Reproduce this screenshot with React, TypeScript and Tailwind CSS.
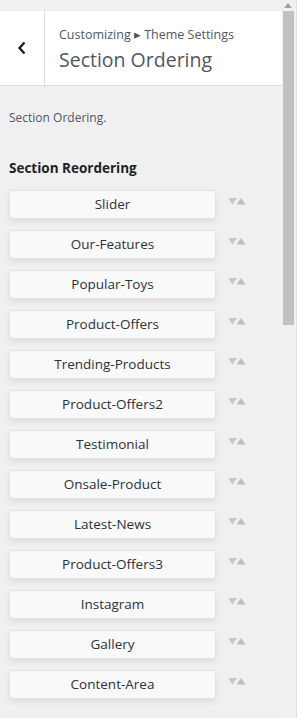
import React from "react";

const items = [
  "Slider",
  "Our-Features",
  "Popular-Toys",
  "Product-Offers",
  "Trending-Products",
  "Product-Offers2",
  "Testimonial",
  "Onsale-Product",
  "Latest-News",
  "Product-Offers3",
  "Instagram",
  "Gallery",
  "Content-Area",
];

function Arrows() {
  return (
    <svg width="18" height="7" viewBox="0 0 18 7" className="block">
      <polygon points="0,0 9,0 4.5,6.5" fill="#c8c8c8" />
      <polygon points="8.5,6.5 17.5,6.5 13,0" fill="#bdbdbd" />
    </svg>
  );
}

export default function App() {
  return (
    <div
      className="flex h-[718px] w-[297px] overflow-hidden bg-[#f0f0f1]"
      style={{ fontFamily: '"Open Sans", "Noto Sans", sans-serif' }}
    >
      <div className="flex w-[282px] flex-col pt-[11px]">
        <div className="flex h-[75px] border-b border-[#dcdcde] bg-white">
          <div className="flex w-[45px] items-center justify-center border-r border-[#dcdcde]">
            <svg width="10" height="14" viewBox="0 0 10 14">
              <path d="M7.5 1.5 L2.5 7 L7.5 12.5" fill="none" stroke="#1d2327" strokeWidth="2.4" />
            </svg>
          </div>
          <div className="flex flex-col pl-[14px] pt-[15px]">
            <div className="text-[12.5px] leading-[18px] text-[#50575e]">Customizing ▸ Theme Settings</div>
            <div className="mt-[3px] text-[19.5px] leading-[26px] text-[#50575e]">Section Ordering</div>
          </div>
        </div>
        <div className="pl-[9px] pt-[23px] text-[12px] leading-[18px] text-[#50575e]">Section Ordering.</div>
        <div className="pl-[9px] pt-[31px] text-[13.5px] font-bold leading-[20px] text-[#1d2327]">
          Section Reordering
        </div>
        <div className="flex flex-col gap-[11px] pl-[9px] pt-[12px]">
          {items.map((it) => (
            <div key={it} className="flex items-center">
              <div className="flex h-[29px] w-[207px] items-center justify-center rounded-[3px] border border-[#e2e2e2] bg-[#f9f9f9] text-[13.5px] text-[#2c3338] shadow-[0_3px_6px_rgba(0,0,0,0.08)]">
                {it}
              </div>
              <div className="ml-[12px] -mt-[7px]">
                <Arrows />
              </div>
            </div>
          ))}
        </div>
      </div>
      <div className="flex w-[15px] flex-col items-start border-r border-[#e2e2e2] bg-[#f1f1f1]">
        <div className="flex h-[11px] w-[12px] items-center justify-center">
          <svg width="8" height="5" viewBox="0 0 8 5">
            <polygon points="0,5 8,5 4,0" fill="#a3a3a3" />
          </svg>
        </div>
        <div className="ml-[1px] h-[314px] w-[11px] bg-[#c1c1c1]" />
      </div>
    </div>
  );
}
